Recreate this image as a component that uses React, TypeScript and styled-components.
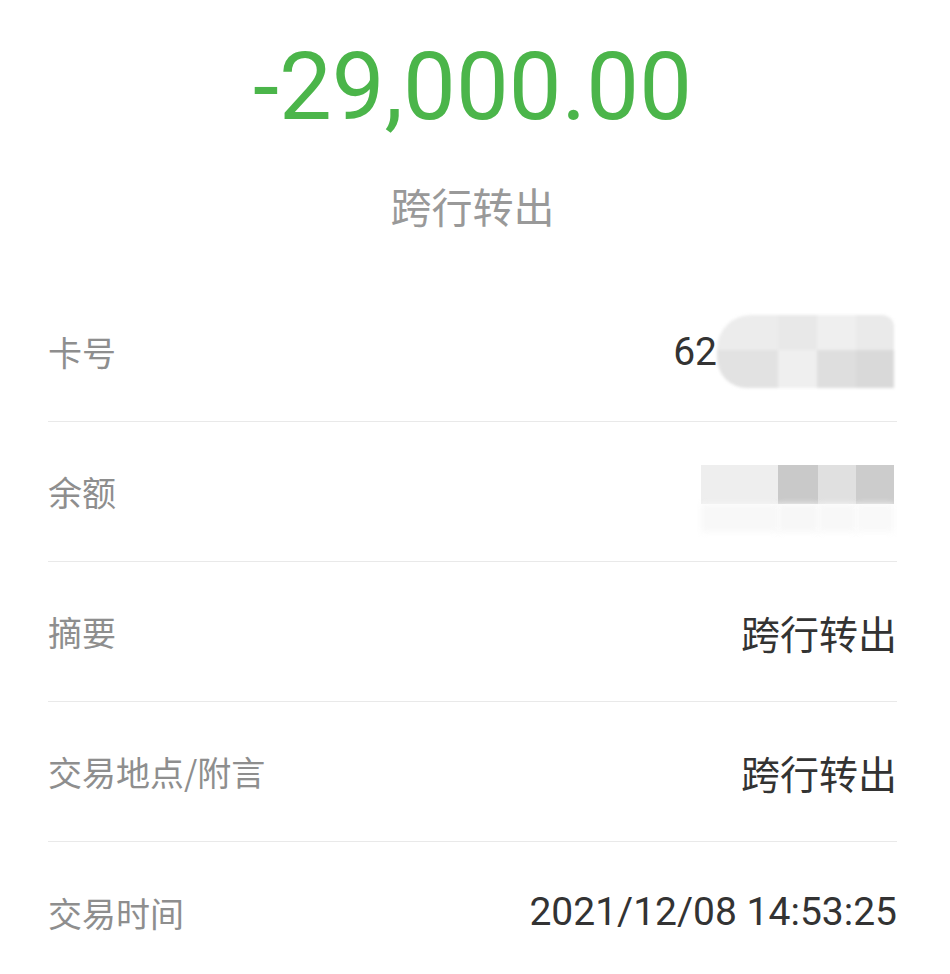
import styled, { createGlobalStyle } from "styled-components";

const GlobalStyle = createGlobalStyle`
  html, body {
    margin: 0;
    padding: 0;
    background: #ffffff;
  }
  body {
    font-family: Roboto, "Noto Sans CJK SC", sans-serif;
  }
`;

const Page = styled.div`
  width: 950px;
  height: 974px;
  overflow: hidden;
  background: #ffffff;
  box-sizing: border-box;
  padding: 0 53px 0 48px;
`;

const Header = styled.div`
  display: flex;
  flex-direction: column;
  align-items: center;
  height: 282px;
`;

const Amount = styled.div`
  margin-top: 40px;
  font-family: Roboto, sans-serif;
  font-size: 94px;
  line-height: 94px;
  color: #4bb54a;
`;

const Subtitle = styled.div`
  margin-top: 51px;
  font-family: "Noto Sans CJK SC", sans-serif;
  font-size: 41px;
  line-height: 41px;
  color: #999999;
`;

const Row = styled.div<{ $last?: boolean }>`
  display: flex;
  align-items: center;
  justify-content: space-between;
  height: 140px;
  border-bottom: ${(p) => (p.$last ? "none" : "1px solid #e9e9e9")};
  box-sizing: border-box;
`;

const Label = styled.div`
  font-family: "Noto Sans CJK SC", sans-serif;
  font-size: 34px;
  color: #8e8e8e;
`;

const Value = styled.div`
  display: flex;
  align-items: center;
  font-family: Roboto, "Noto Sans CJK SC", sans-serif;
  font-size: 39px;
  color: #333333;
`;

const Mosaic = styled.div<{ $cols: string; $rows: string; $shift?: number }>`
  display: grid;
  grid-template-columns: ${(p) => p.$cols};
  grid-template-rows: ${(p) => p.$rows};
  margin-top: ${(p) => p.$shift ?? 0}px;
  margin-right: 3px;
`;

const Cell = styled.div<{ $c: string; $soft?: boolean }>`
  background: ${(p) => p.$c};
  filter: ${(p) => (p.$soft ? "blur(3px)" : "none")};
`;

const CardMosaic = styled(Mosaic)`
  border-radius: 34px 12px 0 30px;
  overflow: hidden;
  filter: blur(1.5px);
`;

const rows = [
  { label: "摘要", value: "跨行转出" },
  { label: "交易地点/附言", value: "跨行转出" },
];

export default function App() {
  return (
    <Page>
      <GlobalStyle />
      <Header>
        <Amount>-29,000.00</Amount>
        <Subtitle>跨行转出</Subtitle>
      </Header>
      <Row>
        <Label>卡号</Label>
        <Value>
          62
          <CardMosaic $cols="61px 39px 39px 38px" $rows="35px 38px">
            <Cell $c="#ececec" />
            <Cell $c="#e8e8e8" />
            <Cell $c="#efefef" />
            <Cell $c="#eaeaea" />
            <Cell $c="#e2e2e2" />
            <Cell $c="#efefef" />
            <Cell $c="#dedede" />
            <Cell $c="#d9d9d9" />
          </CardMosaic>
        </Value>
      </Row>
      <Row>
        <Label>余额</Label>
        <Value>
          <Mosaic $cols="77px 40px 38px 38px" $rows="39px 28px" $shift={14}>
            <Cell $c="#eeeeee" />
            <Cell $c="#c9c9c9" />
            <Cell $c="#e0e0e0" />
            <Cell $c="#cccccc" />
            <Cell $c="#f8f8f8" $soft />
            <Cell $c="#f7f7f7" $soft />
            <Cell $c="#f8f8f8" $soft />
            <Cell $c="#f9f9f9" $soft />
          </Mosaic>
        </Value>
      </Row>
      {rows.map((r) => (
        <Row key={r.label}>
          <Label>{r.label}</Label>
          <Value>{r.value}</Value>
        </Row>
      ))}
      <Row $last>
        <Label>交易时间</Label>
        <Value>2021/12/08 14:53:25</Value>
      </Row>
    </Page>
  );
}
